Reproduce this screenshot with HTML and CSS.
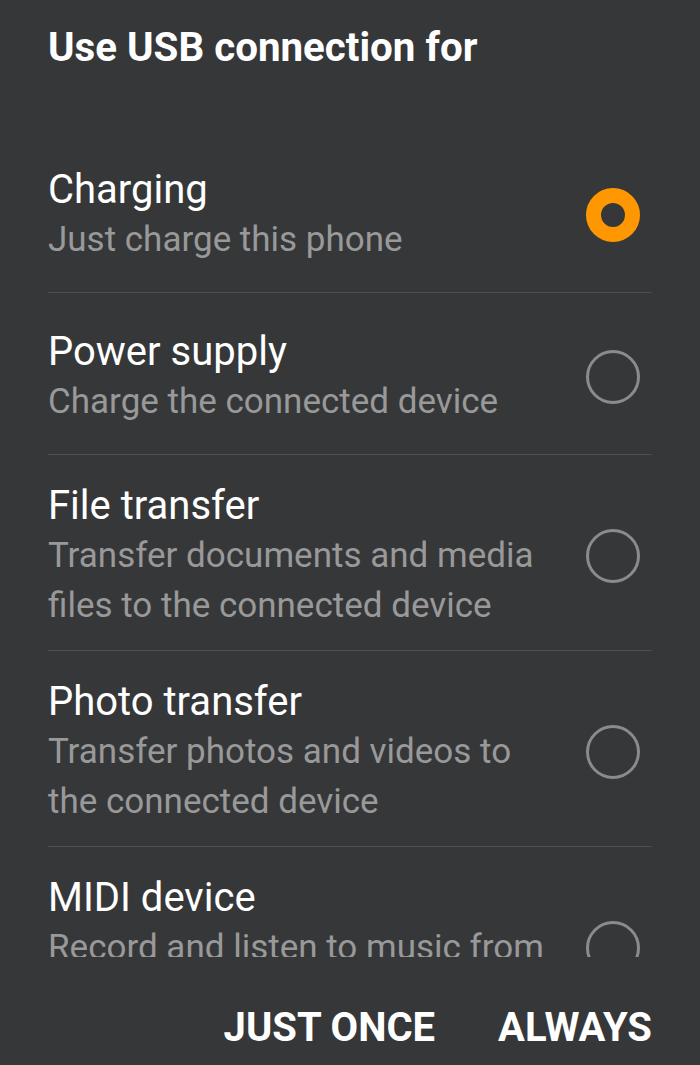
FILE: index.html
```html
<!DOCTYPE html>
<html>
<head>
<meta charset="utf-8">
<link rel="stylesheet" href="styles.css">
</head>
<body>
<div class="dialog">
  <h1 class="title">Use USB connection for</h1>
  <div class="list">
    <div class="item">
      <div class="text">
        <div class="name">Charging</div>
        <div class="desc">Just charge this phone</div>
      </div>
      <div class="radio checked"></div>
    </div>
    <div class="item">
      <div class="text">
        <div class="name">Power supply</div>
        <div class="desc">Charge the connected device</div>
      </div>
      <div class="radio"></div>
    </div>
    <div class="item">
      <div class="text">
        <div class="name">File transfer</div>
        <div class="desc">Transfer documents and media files to the connected device</div>
      </div>
      <div class="radio"></div>
    </div>
    <div class="item">
      <div class="text">
        <div class="name">Photo transfer</div>
        <div class="desc">Transfer photos and videos to the connected device</div>
      </div>
      <div class="radio"></div>
    </div>
    <div class="item">
      <div class="text">
        <div class="name">MIDI device</div>
        <div class="desc">Record and listen to music from the connected device</div>
      </div>
      <div class="radio"></div>
    </div>
  </div>
  <div class="buttons">
    <span class="btn">JUST ONCE</span>
    <span class="btn">ALWAYS</span>
  </div>
</div>
</body>
</html>
```

FILE: styles.css
```css
html, body {
  margin: 0;
  padding: 0;
  background: #363739;
}
body {
  font-family: Roboto, "Noto Sans", "Liberation Sans", sans-serif;
  color: #ffffff;
}
.dialog {
  width: 700px;
  height: 1065px;
  display: flex;
  flex-direction: column;
  overflow: hidden;
}
.title {
  margin: 0;
  padding: 24px 48px 59px 48px;
  font-size: 40.3px;
  line-height: 48px;
  font-weight: 700;
  color: #ffffff;
}
.list {
  height: 826px;
  overflow: hidden;
  padding: 0 48px;
  flex-shrink: 0;
}
.item {
  display: flex;
  align-items: center;
  min-height: 162px;
  box-sizing: border-box;
  padding: 26px 0 19px 0;
  border-bottom: 1px solid #4d4e50;
}
.text {
  flex: 1;
  min-width: 0;
}
.name {
  font-size: 40px;
  line-height: 49px;
  color: #ffffff;
}
.desc {
  font-size: 35px;
  line-height: 50px;
  color: #999999;
}
.name + .desc {
  margin-top: 1px;
}
.radio {
  flex-shrink: 0;
  width: 54px;
  height: 54px;
  box-sizing: border-box;
  border-radius: 50%;
  border: 3.5px solid #8b8b8b;
  margin-left: 30px;
  margin-right: 12px;
}
.radio.checked {
  border: 15.5px solid #ff9800;
}
.buttons {
  flex: 1;
  display: flex;
  justify-content: flex-end;
  align-items: flex-start;
  gap: 63px;
  padding: 47px 48px 0 0;
}
.btn {
  font-size: 40px;
  line-height: 48px;
  font-weight: 700;
  color: #ffffff;
}
```
